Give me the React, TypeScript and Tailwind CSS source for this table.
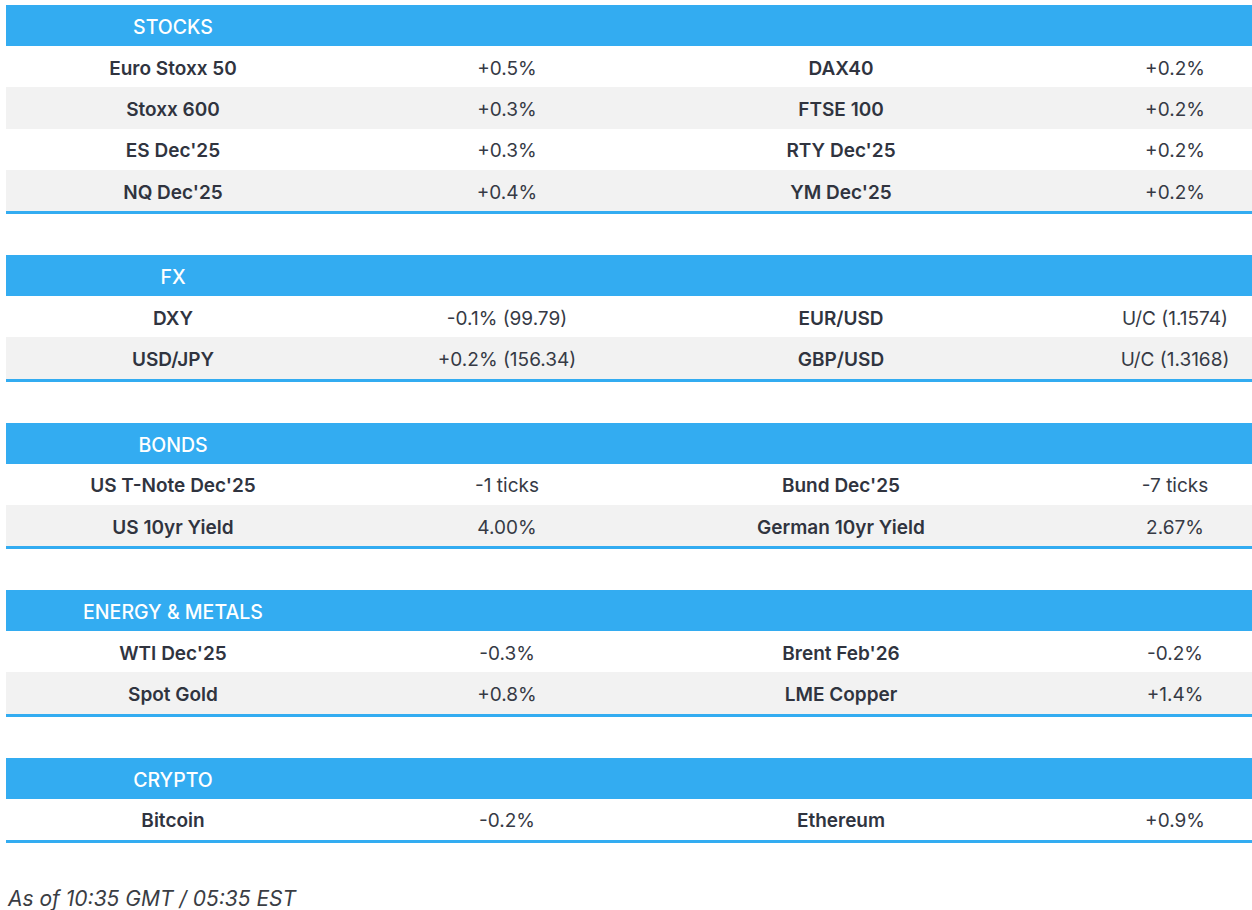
type Row = [string, string, string, string];

const sections: { title: string; rows: Row[] }[] = [
  {
    title: 'STOCKS',
    rows: [
      ['Euro Stoxx 50', '+0.5%', 'DAX40', '+0.2%'],
      ['Stoxx 600', '+0.3%', 'FTSE 100', '+0.2%'],
      ["ES Dec'25", '+0.3%', "RTY Dec'25", '+0.2%'],
      ["NQ Dec'25", '+0.4%', "YM Dec'25", '+0.2%'],
    ],
  },
  {
    title: 'FX',
    rows: [
      ['DXY', '-0.1% (99.79)', 'EUR/USD', 'U/C (1.1574)'],
      ['USD/JPY', '+0.2% (156.34)', 'GBP/USD', 'U/C (1.3168)'],
    ],
  },
  {
    title: 'BONDS',
    rows: [
      ["US T-Note Dec'25", '-1 ticks', "Bund Dec'25", '-7 ticks'],
      ['US 10yr Yield', '4.00%', 'German 10yr Yield', '2.67%'],
    ],
  },
  {
    title: 'ENERGY & METALS',
    rows: [
      ["WTI Dec'25", '-0.3%', "Brent Feb'26", '-0.2%'],
      ['Spot Gold', '+0.8%', 'LME Copper', '+1.4%'],
    ],
  },
  {
    title: 'CRYPTO',
    rows: [['Bitcoin', '-0.2%', 'Ethereum', '+0.9%']],
  },
];

export default function App() {
  return (
    <main className="w-[1252px] h-[910px] overflow-hidden bg-white text-[#30343f] font-['Inter',sans-serif]">
      <div className="pl-[6px] pt-[5px]">
        {sections.map((section) => (
          <div key={section.title} className="w-[1336px] mb-[41px] border-b-[3px] border-[#33acf1]">
            {/* header */}
            <div className="grid grid-cols-4 h-[41px] pt-[5px] bg-[#33acf1] text-white text-[19.5px] font-medium">
              <div className="flex items-center justify-center">{section.title}</div>
            </div>
            {section.rows.map((row, i) => (
              <div
                key={row[0]}
                className={`grid grid-cols-4 h-[41.25px] pt-[5px] text-[19px] ${i % 2 === 1 ? 'bg-[#f2f2f2]' : 'bg-white'}`}
              >
                <div className="flex items-center justify-center font-semibold">{row[0]}</div>
                <div className="flex items-center justify-center text-[#363a45]">{row[1]}</div>
                <div className="flex items-center justify-center font-semibold">{row[2]}</div>
                <div className="flex items-center justify-center text-[#363a45]">{row[3]}</div>
              </div>
            ))}
          </div>
        ))}
      </div>
      <p className="pl-[8px] mt-[1px] italic text-[21px] leading-[30px] text-[#3a3d44]">As of 10:35 GMT / 05:35 EST</p>
    </main>
  );
}
